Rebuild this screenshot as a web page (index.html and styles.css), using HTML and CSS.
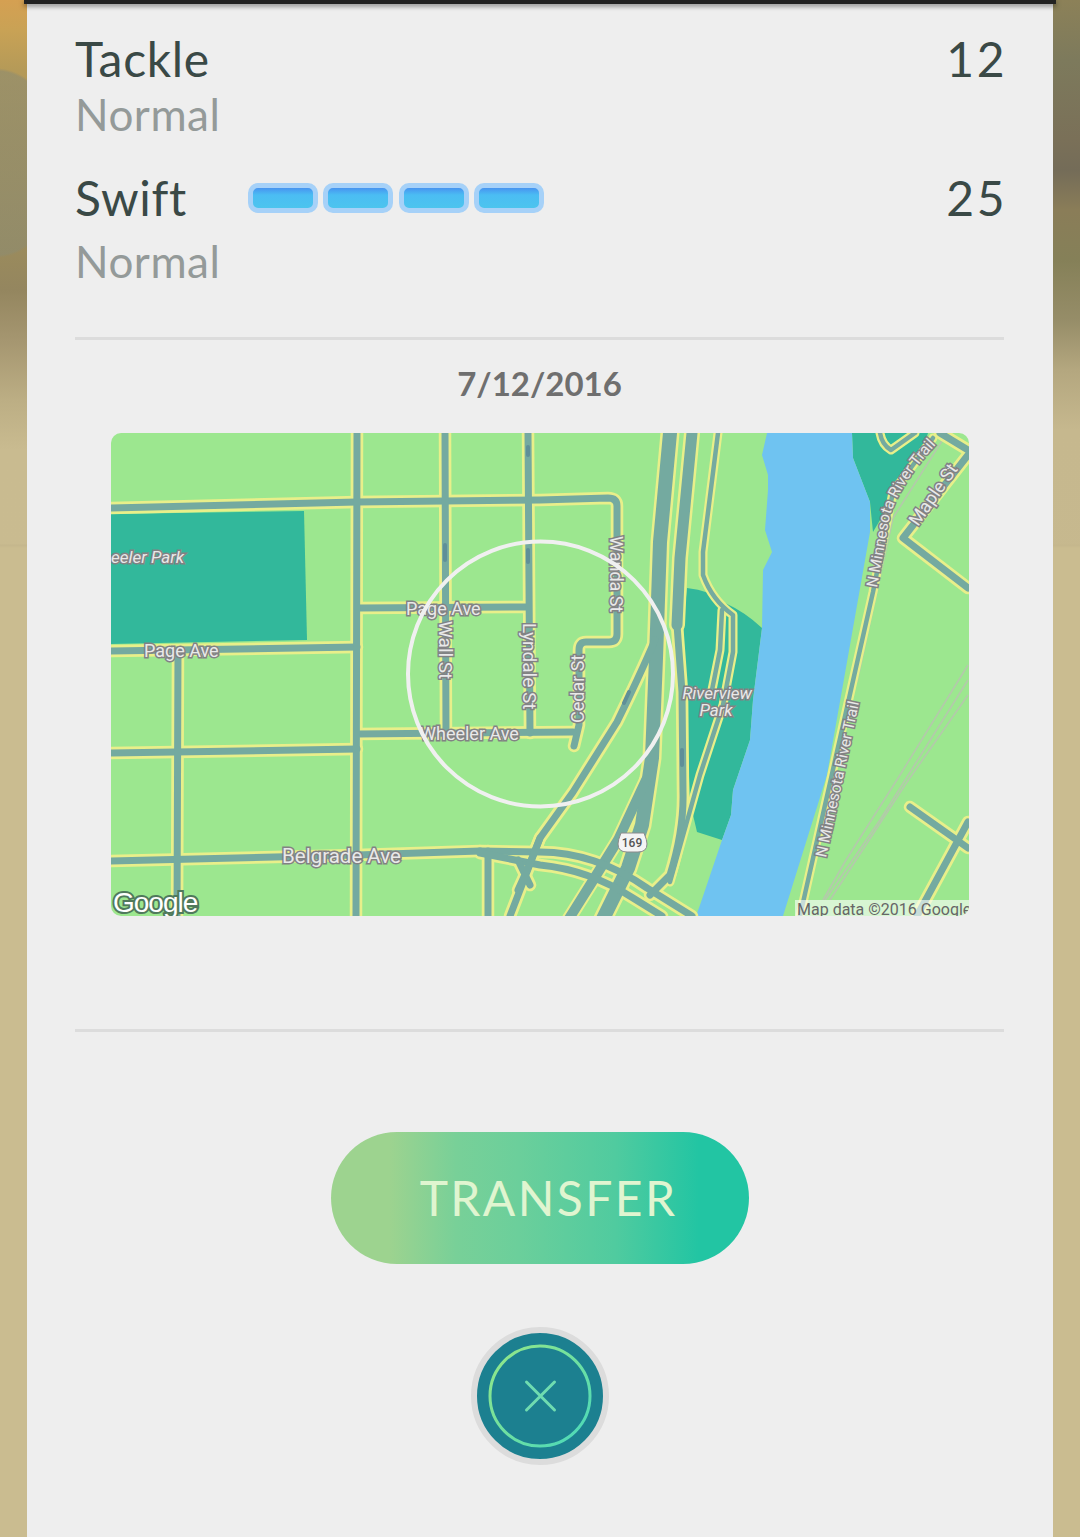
FILE: index.html
```html
<!DOCTYPE html>
<html lang="en">
<head>
<meta charset="utf-8">
<title>Transfer</title>
<link rel="stylesheet" href="styles.css">
</head>
<body>
<div class="screen">
  <div class="side side-left"></div>
  <main class="panel">
    <div class="topbar"></div>
    <section class="moves">
      <div class="move move-fast">
        <div class="move-line"><span class="move-name">Tackle</span><span class="move-power">12</span></div>
        <div class="move-type">Normal</div>
      </div>
      <div class="move move-charge">
        <div class="move-line">
          <span class="move-name">Swift</span>
          <span class="energy"><i class="pip"></i><i class="pip"></i><i class="pip"></i><i class="pip"></i></span>
          <span class="move-power">25</span>
        </div>
        <div class="move-type type-charge">Normal</div>
      </div>
    </section>
    <hr class="rule">
    <div class="date">7/12/2016</div>
    <div class="map">
      <svg class="map-svg" viewBox="111 433 858 483" width="858" height="483" xmlns="http://www.w3.org/2000/svg">
        <defs>
          <g id="streets">
            <path d="M111 508L357 502L540 500L608 498Q617 498 617 506L617 634Q617 642 609 642L586 642Q579 642 579 650L579 725L574 746"/>
            <path d="M358 608L528 607"/>
            <path d="M111 651L357 647"/>
            <path d="M111 753L357 749"/>
            <path d="M357 734L573 732"/>
            <path d="M111 861L357 855L480 851"/>
            <path d="M357 433L356 916"/>
            <path d="M445 433L446 733"/>
            <path d="M528 433L530 733"/>
            <path d="M178 651L177 916"/>
            <path d="M488 851L488 916"/>
            <path d="M480 851L540 852Q595 852 647 888L692 916"/>
            <path d="M480 853L540 865Q590 870 633 898L662 916"/>
            <path d="M655 640Q640 675 617 722L573 792L540 838L510 916"/>
            <path d="M540 838L528 868L518 890M518 860L530 885"/>
            <path d="M968 455L903 538L968 588"/>
            <path d="M940 433L968 450"/>
            <path d="M910 807L968 848M968 822L917 916"/>
            <path d="M677 625L682 692L683 792Q684 830 670 875L650 895"/>
          </g>
          <path id="hw-wide" d="M670 433L660 542L656 658L652 758L642 825L628 868L600 925"/>
          <path id="hw-mid" d="M692 433L680 558L677 625"/>
          <path id="hw-low" d="M646 780L618 840L592 882L565 925"/>
          <g id="lanes">
            <path d="M718 433L703 552L703 575Q712 600 733 615L733 652L723 705L700 775L670 882"/>
            <path d="M722 610L720 650L712 690"/>
            <path d="M800 916L873 592L893 492"/>
            <path d="M893 492L933 438"/>
            <path d="M880 433Q882 445 891 450L915 433"/>
          </g>
          <path id="trail-upper" d="M877 588L890 515Q903 478 944 436"/>
          <clipPath id="attribution-clip"><rect x="795" y="900" width="174" height="16"/></clipPath>
        </defs>
        <rect class="land" x="111" y="433" width="858" height="483"/>
        <path class="park" d="M111 514L304 511L307 640L111 644Z"/>
        <path class="park" d="M687 588Q710 590 725 603Q745 612 762 628L753 700L750 740L733 790L731 815L722 840L697 832L690 802L683 625Z"/>
        <path class="park" d="M852 433L853 458L870 502L873 532L893 498L920 458L928 433Z"/>
        <path class="water" d="M767 433L762 455L768 475L768 490L765 530L772 552L763 570L762 628L753 700L750 740L733 790L731 815L722 840L700 905L696 916L783 916L827 775L870 532L870 502L853 458L852 433Z"/>
        <g class="rail">
          <path d="M823 900L846 860L900 775L968 665"/>
          <path d="M825 900L880 820L968 680"/>
          <path d="M830 900L905 785L968 695"/>
          <path d="M947 433L893 518L857 682"/>
        </g>
        <use href="#hw-wide" class="edge edge-wide"/>
        <use href="#hw-low" class="edge edge-low"/>
        <use href="#hw-mid" class="edge edge-mid"/>
        <use href="#streets" class="edge"/>
        <use href="#lanes" class="edge edge-lane"/>
        <use href="#hw-wide" class="core core-wide"/>
        <use href="#hw-low" class="core core-low"/>
        <use href="#hw-mid" class="core core-mid"/>
        <use href="#streets" class="core"/>
        <use href="#lanes" class="core core-lane"/>
        <path class="oneway" d="M445 545V560M528 447V455M528 550V562M629 692L624 703M682 750V765"/>
        <g class="label">
          <text class="label-it" x="111" y="563">eeler Park</text>
          <text x="144" y="657">Page Ave</text>
          <text x="406" y="615">Page Ave</text>
          <text x="420" y="740">Wheeler Ave</text>
          <text class="label-lg" x="282" y="863">Belgrade Ave</text>
          <text class="label-it" x="717" y="699" text-anchor="middle">Riverview</text>
          <text class="label-it" x="716" y="716" text-anchor="middle">Park</text>
          <text class="label-v" transform="translate(439 621) rotate(90)">Wall St</text>
          <text class="label-v" transform="translate(523 623) rotate(90)">Lyndale St</text>
          <text transform="translate(610 536) rotate(90)">Wanda St</text>
          <text transform="translate(584 723) rotate(-90)">Cedar St</text>
          <text class="label-sm" transform="translate(826 858) rotate(-78)">N Minnesota River Trail</text>
          <text class="label-sm"><textPath href="#trail-upper">N Minnesota River Trail</textPath></text>
          <text transform="translate(918 527) rotate(-55)">Maple St</text>
        </g>
        <path class="shield" d="M621 833H644Q647 840 647 844Q647 852 638 852H627Q618 852 618 844Q618 840 621 833Z"/>
        <text class="shield-num" x="632" y="847" text-anchor="middle">169</text>
        <circle class="range" cx="540.5" cy="674" r="132.5"/>
        <text class="google" x="113" y="912">Google</text>
        <rect class="attr-bg" x="795" y="900" width="174" height="16"/>
        <text class="attr" x="797" y="915" clip-path="url(#attribution-clip)">Map data ©2016 Google</text>
      </svg>
    </div>
    <hr class="rule rule-lower">
    <button class="transfer" type="button">TRANSFER</button>
    <button class="close" type="button" aria-label="Close">
      <svg class="close-icon" viewBox="0 0 126 126" width="126" height="126" xmlns="http://www.w3.org/2000/svg">
        <defs>
          <linearGradient id="ring" x1="0" y1="0" x2="1" y2="1">
            <stop offset="0" stop-color="#96e886"/>
            <stop offset="1" stop-color="#48d8bc"/>
          </linearGradient>
        </defs>
        <circle cx="63" cy="63" r="50" fill="none" stroke="url(#ring)" stroke-width="3"/>
        <path d="M49.5 49L77.5 77M77.5 49L49.5 77" fill="none" stroke="#6fdcb0" stroke-width="3" stroke-linecap="round"/>
      </svg>
    </button>
  </main>
  <div class="side side-right"></div>
</div>
</body>
</html>
```
FILE: styles.css
```css
* { box-sizing: border-box; }
html, body { margin: 0; padding: 0; }
body { background: #c9bb8f; font-family: "Lato", "Liberation Sans", sans-serif; }
.screen { display: flex; width: 1080px; height: 1537px; overflow: hidden; }
.side { flex: 0 0 27px; height: 100%; }
.side-left {
  background:
    linear-gradient(to bottom, transparent 544px, #c4b68c 545px, #cabc90 548px),
    radial-gradient(ellipse 70px 95px at -5px 163px, rgba(142,140,112,.62) 0 97%, transparent 100%),
    linear-gradient(to bottom, #d5a052 0, #c9a255 30px, #b59a58 70px, #9c8c5c 240px, #94865f 290px, #a59670 340px, #bcae84 400px, #c9bb90 450px, #cabc90 100%);
}
.side-right {
  background:
    linear-gradient(to bottom, transparent 544px, #c4b68c 545px, #cabc90 548px),
    linear-gradient(to bottom, #8c8158 0, #7d7a5c 60px, #7a7058 140px, #746c58 170px, #8a7d58 210px, #858058 260px, #968d68 320px, #b4a77f 370px, #c6b88e 430px, #cabc90 100%);
}
.panel { position: relative; flex: 1 1 auto; display: flex; flex-direction: column; align-items: stretch; background: #eeeeee; padding: 0 49px 0 48px; }
.topbar { position: absolute; left: -3px; right: -3px; top: 0; height: 4px; background: #222222; box-shadow: 0 2px 5px rgba(0,0,0,.5); }
.moves { display: flex; flex-direction: column; padding: 30px 0 0; height: 337px; }
.move-line { display: flex; align-items: center; height: 58px; }
.move-name { font-size: 48px; line-height: 58px; letter-spacing: .7px; color: #3a4946; }
.move-power { margin-left: auto; margin-right: -3px; font-size: 48px; line-height: 58px; letter-spacing: 2.5px; color: #3a4946; }
.move-type { font-size: 44px; line-height: 52px; letter-spacing: .5px; color: #949a99; }
.move-charge { margin-top: 29px; }
.move-charge .move-name { width: 173px; }
.type-charge { margin-top: 8px; }
.energy { display: flex; gap: 5.4px; }
.pip { display: block; width: 70px; height: 30px; border: 5px solid #a6d1f8; border-radius: 10px; background: linear-gradient(to bottom, #4794f0 0, #4bbdf3 35%, #4cc4ee 100%); }
.rule { width: 100%; height: 3px; margin: 0; border: 0; background: #dcdcdc; flex: none; }
.date { margin-top: 23px; height: 71px; text-align: center; font-size: 33px; line-height: 40px; font-weight: 700; color: #6f6f6f; }
.map { align-self: center; width: 858px; height: 483px; border-radius: 10px; overflow: hidden; flex: none; margin-top: -1px; }
.map-svg { display: block; }
.land { fill: #9ce78f; }
.park { fill: #32b89b; }
.water { fill: #6fc3f1; }
.rail path { fill: none; stroke: #b4c9ab; stroke-width: 1.6; }
.edge, .core { fill: none; stroke-linejoin: round; stroke-linecap: round; }
.edge { stroke: #e8ef8a; stroke-width: 12.5; }
.core { stroke: #74aaa0; stroke-width: 7; }
.edge-lane { stroke-width: 9; }
.core-lane { stroke-width: 4.5; }
.edge-wide { stroke-width: 19; }
.core-wide { stroke-width: 14; }
.edge-mid { stroke-width: 16; }
.core-mid { stroke-width: 11; }
.edge-low { stroke-width: 14; }
.core-low { stroke-width: 10; }
.oneway { fill: none; stroke: #5f8f98; stroke-width: 4; stroke-linecap: round; }
.label text { font-family: "Roboto", "Liberation Sans", sans-serif; font-size: 18px; fill: #e9e9e9; stroke: #828284; stroke-width: 3px; paint-order: stroke; }
.label .label-lg { font-size: 20.5px; }
.label .label-sm { font-size: 15.5px; }
.label .label-it { font-size: 17px; font-style: italic; }
.label .label-v { font-size: 19px; }
.shield { fill: #f4f4f4; stroke: #8a8a8a; stroke-width: 1; }
.shield-num { font-family: "Roboto", "Liberation Sans", sans-serif; font-size: 12px; font-weight: 500; fill: #555555; }
.range { fill: none; stroke: #f0f0f0; stroke-width: 4; }
.google { font-family: "Liberation Sans", sans-serif; font-size: 28px; font-weight: 400; letter-spacing: -1px; fill: #ffffff; stroke: #50795c; stroke-width: 4px; paint-order: stroke; }
.attr-bg { fill: rgba(255,255,255,.6); }
.attr { font-family: "Roboto", "Liberation Sans", sans-serif; font-size: 16px; fill: #666666; }
.rule-lower { margin-top: 113px; }
.transfer { align-self: center; flex: none; width: 418px; height: 132px; margin-top: 100px; padding: 0 0 2px 18px; border: 0; border-radius: 66px; background: linear-gradient(to right, #9dd38f 0, #9dd38f 14%, #78d098 30%, #6bcf9b 45%, #50cb9f 68%, #22c5a3 88%, #22c5a3 100%); color: #e0f5d0; font-family: "Lato", "Liberation Sans", sans-serif; font-size: 48px; font-weight: 400; letter-spacing: 2.4px; }
.close { align-self: center; flex: none; width: 138px; height: 138px; margin-top: 63px; padding: 0; border: 6px solid #dcdcdc; border-radius: 50%; background: #1c8090; }
.close-icon { display: block; }
```
